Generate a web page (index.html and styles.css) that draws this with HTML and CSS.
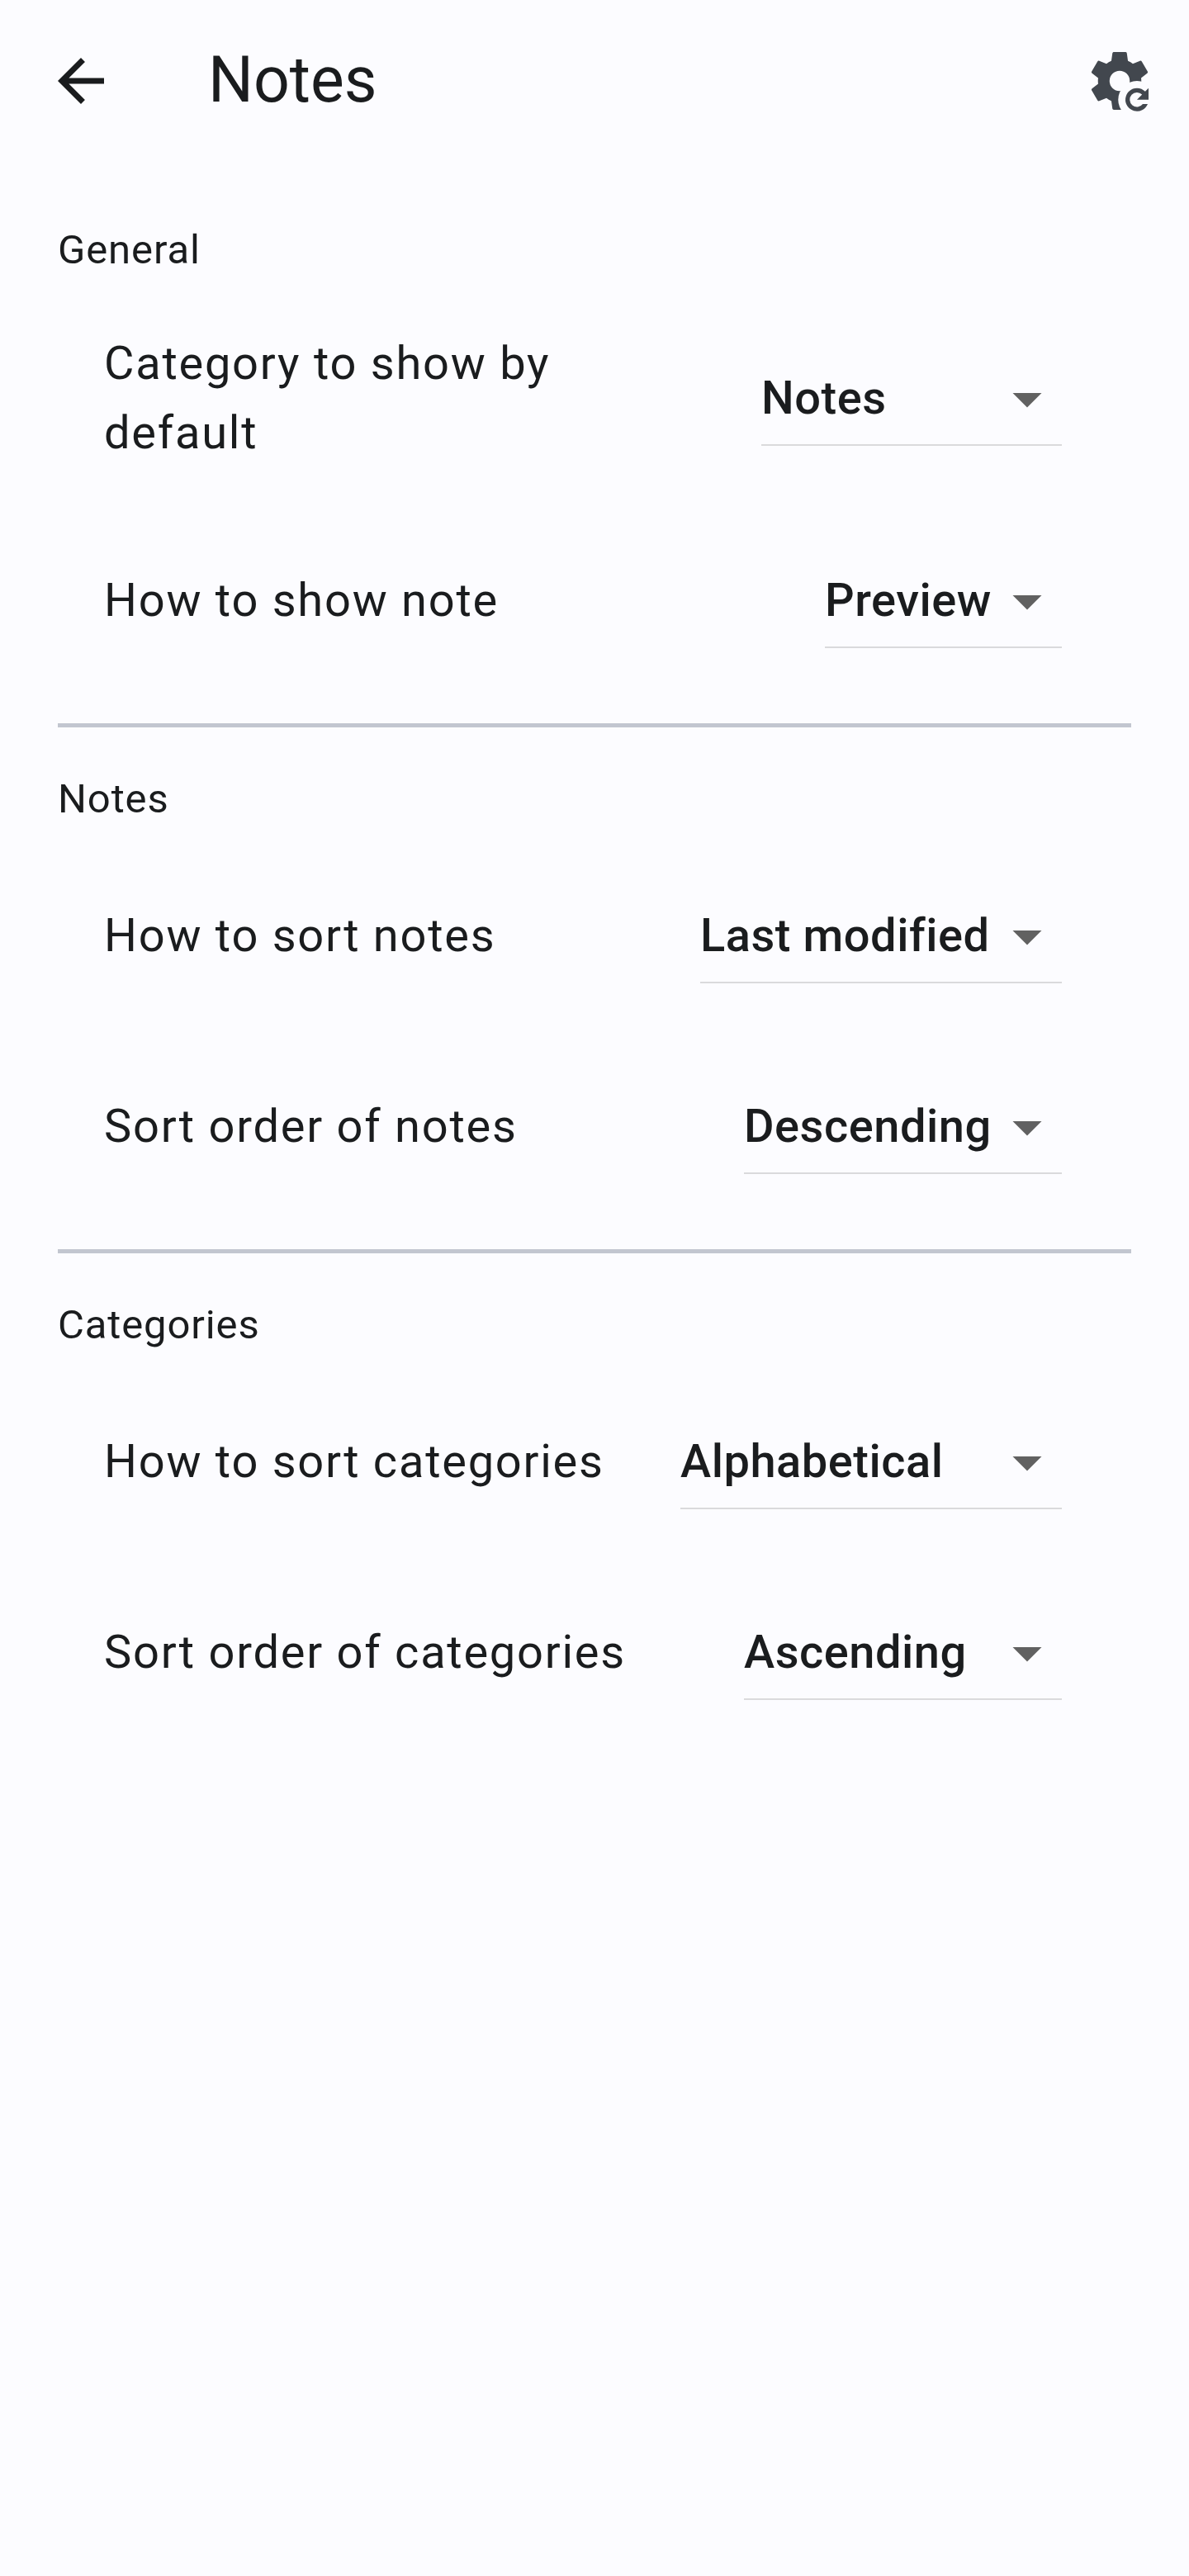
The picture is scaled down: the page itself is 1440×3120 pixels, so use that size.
FILE: index.html
```html
<!DOCTYPE html>
<html lang="en">
<head>
<meta charset="utf-8">
<title>Notes</title>
<link rel="stylesheet" href="styles.css">
</head>
<body>
<header class="app-bar">
  <svg class="icon back" viewBox="0 0 24 24"><path d="M20 11H7.83l5.59-5.59L12 4l-8 8 8 8 1.41-1.41L7.83 13H20v-2z"/></svg>
  <h1 class="title">Notes</h1>
  <svg class="icon reset" viewBox="0 0 24 24">
    <mask id="cut"><rect width="24" height="24" fill="#fff"/><circle cx="18" cy="18.5" r="6.5" fill="#000"/></mask>
    <path mask="url(#cut)" d="M12 15.5A3.5 3.5 0 0 1 8.5 12 3.5 3.5 0 0 1 12 8.5a3.5 3.5 0 0 1 3.5 3.5 3.5 3.5 0 0 1-3.5 3.5m7.43-2.53c.04-.32.07-.64.07-.97s-.03-.66-.07-1l2.11-1.63c.19-.15.24-.42.12-.64l-2-3.46c-.12-.22-.39-.31-.61-.22l-2.49 1c-.52-.39-1.06-.73-1.69-.98l-.37-2.65A.506.506 0 0 0 14 2h-4c-.25 0-.46.18-.5.42l-.37 2.65c-.63.25-1.17.59-1.69.98l-2.49-1c-.22-.09-.49 0-.61.22l-2 3.46c-.13.22-.07.49.12.64L4.57 11c-.04.34-.07.67-.07 1s.03.65.07.97l-2.11 1.66c-.19.15-.25.42-.12.64l2 3.46c.12.22.39.3.61.22l2.49-1.01c.52.4 1.06.74 1.69.99l.37 2.65c.04.24.25.42.5.42h4z"/>
    <path d="M18 14.5c1.11 0 2.11.45 2.83 1.17L22 14.5v4h-4l1.77-1.77A2.5 2.5 0 1 0 20 20h1.71A4 4 0 1 1 18 14.5z"/>
  </svg>
</header>
<main class="settings">
  <section class="group">
    <h2 class="heading">General</h2>
    <div class="row tall"><span class="label">Category to show by default</span><div class="select w-category"><span>Notes</span><svg class="icon caret" viewBox="0 0 24 24"><path d="M7 10l5 5 5-5z"/></svg></div></div>
    <div class="row"><span class="label">How to show note</span><div class="select w-view"><span>Preview</span><svg class="icon caret" viewBox="0 0 24 24"><path d="M7 10l5 5 5-5z"/></svg></div></div>
  </section>
  <section class="group">
    <h2 class="heading">Notes</h2>
    <div class="row"><span class="label">How to sort notes</span><div class="select w-note-sort"><span>Last modified</span><svg class="icon caret" viewBox="0 0 24 24"><path d="M7 10l5 5 5-5z"/></svg></div></div>
    <div class="row"><span class="label">Sort order of notes</span><div class="select w-order"><span>Descending</span><svg class="icon caret" viewBox="0 0 24 24"><path d="M7 10l5 5 5-5z"/></svg></div></div>
  </section>
  <section class="group">
    <h2 class="heading">Categories</h2>
    <div class="row"><span class="label">How to sort categories</span><div class="select w-category-sort"><span>Alphabetical</span><svg class="icon caret" viewBox="0 0 24 24"><path d="M7 10l5 5 5-5z"/></svg></div></div>
    <div class="row"><span class="label">Sort order of categories</span><div class="select w-order"><span>Ascending</span><svg class="icon caret" viewBox="0 0 24 24"><path d="M7 10l5 5 5-5z"/></svg></div></div>
  </section>
</main>
</body>
</html>
```
FILE: styles.css
```css
* { box-sizing: border-box; }
body {
  margin: 0;
  min-height: 3120px;
  background: #fcfcff;
  color: #1a1c1e;
  font-family: Roboto, sans-serif;
}
.icon { display: block; flex: none; width: 84px; height: 84px; fill: currentColor; }
.app-bar { display: flex; align-items: center; height: 196px; padding: 0 42px 0 56px; }
.title {
  flex: 1;
  margin: 0 0 0 112px;
  padding-bottom: 2px;
  font-size: 77px;
  font-weight: 400;
  line-height: 98px;
}
.reset { color: #42474e; }
.settings { padding: 71px 70px 0; }
.group { padding-bottom: 32.5px; }
.group + .group { border-top: 5px solid #c2c6d0; padding-top: 51px; }
.heading {
  margin: 0 0 15.5px;
  padding-top: 1px;
  font-size: 49px;
  font-weight: 400;
  line-height: 70px;
  letter-spacing: .875px;
}
.row {
  display: flex;
  align-items: center;
  justify-content: space-between;
  height: 231px;
  padding: 0 84px 0 56px;
}
.row.tall { height: 259px; }
.label {
  width: 640px;
  padding-bottom: 2px;
  font-size: 56px;
  line-height: 84px;
  letter-spacing: 1.75px;
}
.row.tall .label { width: 580px; }
.select {
  display: flex;
  flex: none;
  align-items: center;
  justify-content: space-between;
  height: 114px;
  border-bottom: 2px solid #dadadc;
  font-size: 56px;
  font-weight: 500;
  line-height: 84px;
  letter-spacing: .525px;
  white-space: nowrap;
}
.caret { margin-top: 2px; color: #616161; }
.w-category { width: 364px; }
.w-view { width: 287px; }
.w-note-sort { width: 438px; }
.w-order { width: 385px; }
.w-category-sort { width: 462px; }
```
